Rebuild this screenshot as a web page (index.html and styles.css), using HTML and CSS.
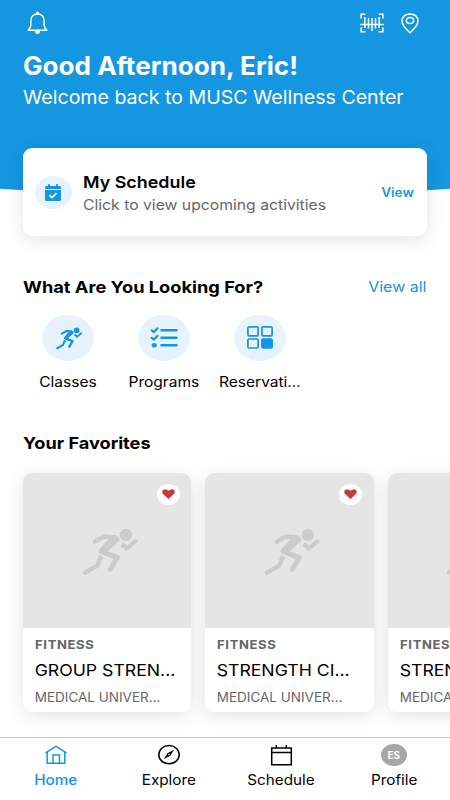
FILE: index.html
```html
<!DOCTYPE html>
<html lang="en">
<head>
  <meta charset="utf-8">
  <title>Home</title>
  <link rel="stylesheet" href="styles.css">
</head>
<body>
  <svg class="defs" width="0" height="0">
    <symbol id="runner" viewBox="226 303 190 150">
      <circle cx="375.500" cy="329.500" r="18.500" fill="currentColor"/>
      <path d="M337 329.500 Q352 331 358 346 L322 378 L297 385 Q290 379 298 371 L322 344 Z" fill="currentColor"/>
      <g fill="none" stroke="currentColor" stroke-linecap="round" stroke-linejoin="round">
        <path d="M282 350 L310 334.500 L343 337" stroke-width="13"/>
        <path d="M347 344 L304 380 L350 398 L329 433" stroke-width="15"/>
        <path d="M369 360 L378 371 L405 348" stroke-width="12"/>
        <path d="M253 443 L290 422 L298 401" stroke-width="13"/>
      </g>
      <path d="M295 391 L309 397 L305 406 L291 402 Z M367 352 L375 362 L366 368 L360 362 Z" fill="currentColor"/>
    </symbol>
    <symbol id="heart" viewBox="0 0 13 10">
      <path d="M6.500 10 L1 5 Q-.6 2.700 1 1 Q3.500-.9 6.500 1.700 Q9.500-.9 12 1 Q13.600 2.700 12 5 Z" fill="#c93a3c"/>
    </symbol>
  </svg>

  <div class="page">
    <header class="hero">
      <div class="hero-icons">
        <svg class="bell" width="22" height="24" viewBox="0 0 22 24">
          <circle cx="10.500" cy="2.200" r="1.600" fill="#fff"/>
          <path d="M1.200 19.300 Q3.900 17 3.900 13 V9.500 Q4.200 3.200 10.500 3 Q16.800 3.200 17.100 9.500 V13 Q17.100 17 19.800 19.300 Z" fill="none" stroke="#fff" stroke-width="1.400" stroke-linejoin="round"/>
          <path d="M7.800 19.500 H13.200 Q12.800 23 10.500 23 Q8.200 23 7.800 19.500 Z" fill="#fff"/>
        </svg>
        <svg class="scan" width="24" height="20" viewBox="0 0 24 20">
          <path d="M1.200 5.500 V1.200 H5.500 M18.500 1.200 H22.800 V5.500 M1.200 14.500 V18.800 H5.500 M18.500 18.800 H22.800 V14.500" fill="none" stroke="#fff" stroke-width="1.600"/>
          <path d="M.3 11.500 H23.700" stroke="#fff" stroke-width="1.500"/>
          <path d="M4.800 4 V15 M8.500 5 V15.500 M12 5 V18 M15.500 5 V15.500 M19.200 4 V15" stroke="#fff" stroke-width="1.500"/>
        </svg>
        <svg class="pin" width="18" height="21" viewBox="0 0 18 21">
          <path d="M9 19.800 Q1 12.500 1 8 Q1.500 1.200 9 1 Q16.500 1.200 17 8 Q17 12.500 9 19.800 Z" fill="none" stroke="#fff" stroke-width="1.500"/>
          <ellipse cx="9" cy="7.500" rx="3.600" ry="3" fill="none" stroke="#fff" stroke-width="1.500"/>
        </svg>
      </div>
      <h1 class="greeting">Good Afternoon, Eric!</h1>
      <p class="welcome">Welcome back to MUSC Wellness Center</p>
    </header>

    <section class="schedule-card">
      <div class="schedule-icon">
        <svg width="16" height="17" viewBox="0 0 16 17">
          <path d="M1.500 2 H3 V.5 Q4-.3 5 .5 V2 H11 V.5 Q12-.3 13 .5 V2 H14.500 Q16 2 16 3.500 V5 H0 V3.500 Q0 2 1.500 2 Z M0 6 H16 V15.500 Q16 17 14.500 17 H1.500 Q0 17 0 15.500 Z" fill="#1496e1"/>
          <path d="M4.500 11.300 L7 13.500 L11.500 9.200" fill="none" stroke="#fff" stroke-width="1.700"/>
        </svg>
      </div>
      <div class="schedule-text">
        <h2 class="schedule-title">My Schedule</h2>
        <p class="schedule-sub">Click to view upcoming activities</p>
      </div>
      <a class="view">View</a>
    </section>

    <div class="section-head">
      <h2 class="looking">What Are You Looking For?</h2>
      <a class="view-all">View all</a>
    </div>

    <div class="categories">
      <div class="category">
        <div class="bubble"><svg width="30" height="24"><use href="#runner"/></svg></div>
        <span class="category-name">Classes</span>
      </div>
      <div class="category">
        <div class="bubble">
          <svg class="list" width="28" height="22" viewBox="0 0 28 22">
            <path d="M11.500 3.200 H26.500 M11.500 10.700 H26.500 M11.500 18.200 H26.500" stroke="#1496e1" stroke-width="2.600" stroke-linecap="round"/>
            <path d="M1.700 3.300 L4 5.100 L7.500 1.300 M1.700 10.800 L4 12.600 L7.500 8.800" fill="none" stroke="#1496e1" stroke-width="2.200" stroke-linecap="round" stroke-linejoin="round"/>
            <ellipse cx="4.300" cy="18.300" rx="2.600" ry="2.300" fill="#1496e1"/>
          </svg>
        </div>
        <span class="category-name">Programs</span>
      </div>
      <div class="category">
        <div class="bubble">
          <svg width="26" height="23" viewBox="0 0 26 23">
            <g fill="none" stroke="#1496e1" stroke-width="1.700">
              <rect x=".9" y=".9" width="10.200" height="9" rx="1.200"/>
              <rect x="14.900" y=".9" width="10.200" height="9" rx="1.200"/>
              <rect x=".9" y="13" width="10.200" height="9" rx="1.200"/>
              <rect x="14.900" y="13" width="10.200" height="9" rx="1.200" fill="#1496e1"/>
            </g>
          </svg>
        </div>
        <span class="category-name">Reservati...</span>
      </div>
    </div>

    <h2 class="favorites-title">Your Favorites</h2>
    <div class="favorites">
      <article class="fav">
        <div class="fav-image">
          <svg width="63.300" height="50"><use href="#runner"/></svg>
          <span class="badge"><svg width="13" height="10"><use href="#heart"/></svg></span>
        </div>
        <p class="fav-type">FITNESS</p>
        <h3 class="fav-name">GROUP STREN...</h3>
        <p class="fav-place">MEDICAL UNIVER...</p>
      </article>
      <article class="fav">
        <div class="fav-image">
          <svg width="63.300" height="50"><use href="#runner"/></svg>
          <span class="badge"><svg width="13" height="10"><use href="#heart"/></svg></span>
        </div>
        <p class="fav-type">FITNESS</p>
        <h3 class="fav-name">STRENGTH CI...</h3>
        <p class="fav-place">MEDICAL UNIVER...</p>
      </article>
      <article class="fav">
        <div class="fav-image">
          <svg width="63.300" height="50"><use href="#runner"/></svg>
          <span class="badge"><svg width="13" height="10"><use href="#heart"/></svg></span>
        </div>
        <p class="fav-type">FITNESS</p>
        <h3 class="fav-name">STRENGTH CI...</h3>
        <p class="fav-place">MEDICAL UNIVER...</p>
      </article>
    </div>

    <nav class="tabs">
      <a class="tab active">
        <svg width="24" height="22" viewBox="0 0 24 22">
          <path d="M1.500 8.800 L12 2.300 L22.500 8.800 M3.200 7.800 V19.300 H20.800 V7.800 M9 19.300 V11 H15.500 V19.300" fill="none" stroke="#1496e1" stroke-width="1.500"/>
        </svg>
        <span>Home</span>
      </a>
      <a class="tab">
        <svg width="24" height="22" viewBox="0 0 24 22">
          <ellipse cx="12" cy="10.700" rx="10.200" ry="9.100" fill="none" stroke="#000" stroke-width="1.500"/>
          <path d="M6.800 15 L10.500 9.300 L17 5.800 L13.300 11.800 Z" fill="#000"/>
          <circle cx="12" cy="10.500" r=".8" fill="#fff"/>
        </svg>
        <span>Explore</span>
      </a>
      <a class="tab">
        <svg width="24" height="22" viewBox="0 0 24 22">
          <path d="M2.700 4 H22.300 V20.700 H2.700 Z M2.700 8.500 H22.300 M7.300 1 V4 M17.300 1 V4" fill="none" stroke="#000" stroke-width="1.500"/>
        </svg>
        <span>Schedule</span>
      </a>
      <a class="tab">
        <div class="avatar">ES</div>
        <span>Profile</span>
      </a>
    </nav>
  </div>
</body>
</html>
```
FILE: styles.css
```css
* {
  box-sizing: border-box;
}

body {
  margin: 0;
  font-family: Inter, "Liberation Sans", sans-serif;
  color: #000;
  background-color: #fff;
}

h1, h2, h3, p {
  margin: 0;
  white-space: nowrap;
  transform-origin: left center;
}

svg {
  display: block;
}

.defs {
  position: absolute;
}

.page {
  height: 800px;
  width: 450px;
  overflow: hidden;
  display: flex;
  flex-direction: column;
}

.hero {
  height: 200px;
  flex: none;
  padding: 11px 24px 0 22.5px;
  color: #fff;
  background-color: #1496e1;
  clip-path: path("M0 0 H450 V188.700 Q225 205 0 188.700 Z");
}

.hero-icons {
  display: flex;
  align-items: center;
  height: 24px;
  padding: 0 7px 0 4.5px;
}

.bell {
  margin-right: auto;
}

.pin {
  margin-left: 17px;
}

.greeting {
  margin-top: 15px;
  font-size: 25px;
  line-height: 32px;
  font-weight: 700;
  transform: scaleX(1.044);
}

.welcome {
  font-size: 18.5px;
  line-height: 30px;
  transform: scaleX(1.058);
}

.schedule-card {
  position: relative;
  flex: none;
  display: flex;
  align-items: center;
  width: 404px;
  height: 88px;
  margin: -51.6px 0 0 23px;
  padding: 0 13px 0 12px;
  border-radius: 9px;
  background-color: #fff;
  box-shadow: 0 4px 18px rgba(30, 60, 50, 0.13);
}

.schedule-icon {
  display: flex;
  align-items: center;
  justify-content: center;
  width: 36.5px;
  height: 33px;
  border-radius: 50%;
  background-color: #e6f3fc;
}

.schedule-text {
  flex: 1;
  padding: 2px 0 0 11.3px;
}

.schedule-title {
  font-size: 16.5px;
  line-height: 23px;
  font-weight: 600;
  transform: scaleX(1.085);
}

.schedule-sub {
  font-size: 14.5px;
  line-height: 22px;
  color: #666;
  transform: scaleX(1.085);
}

.view {
  font-size: 12.8px;
  font-weight: 600;
  color: #1496e1;
  transform: scaleX(1.06);
  transform-origin: right center;
}

.section-head {
  display: flex;
  align-items: center;
  justify-content: space-between;
  height: 24px;
  margin: 38.6px 23.5px 0 22.9px;
}

.looking {
  font-size: 16.5px;
  font-weight: 700;
  transform: scaleX(1.105);
}

.view-all {
  font-size: 14.7px;
  color: #1496e1;
  transform: scaleX(1.09);
  transform-origin: right center;
}

.categories {
  display: flex;
  margin: 15.5px 0 0 19.6px;
}

.category {
  width: 96px;
  display: flex;
  flex-direction: column;
  align-items: center;
}

.bubble {
  display: flex;
  align-items: center;
  justify-content: center;
  width: 52px;
  height: 46.5px;
  border-radius: 50%;
  color: #1496e1;
  background-color: #e6f3fc;
}

.category-name {
  margin-top: 11px;
  font-size: 14px;
  line-height: 20px;
  transform: scaleX(1.11);
}

.favorites-title {
  margin: 39px 0 0 22.9px;
  font-size: 16.5px;
  line-height: 24px;
  font-weight: 700;
  transform: scaleX(1.1);
}

.favorites {
  display: flex;
  gap: 14px;
  margin: 18px 0 0 23px;
}

.fav {
  flex: none;
  width: 168.4px;
  height: 238.5px;
  border-radius: 9px;
  background-color: #fff;
  box-shadow: 0 4px 18px rgba(30, 60, 50, 0.13);
}

.fav-image {
  position: relative;
  display: flex;
  align-items: center;
  justify-content: center;
  height: 155px;
  border-radius: 9px 9px 0 0;
  color: #cbcbcb;
  background-color: #e5e5e5;
}

.badge {
  position: absolute;
  top: 10.5px;
  right: 11.5px;
  display: flex;
  align-items: center;
  justify-content: center;
  width: 23px;
  height: 21px;
  border-radius: 50%;
  background-color: #fff;
}

.fav-type {
  padding: 7px 0 0 11.4px;
  font-size: 12.3px;
  line-height: 20px;
  font-weight: 700;
  letter-spacing: 0.6px;
  color: #666;
  transform: scaleX(1.06);
}

.fav-name {
  padding: 4px 0 0 10.9px;
  font-size: 16.5px;
  line-height: 23px;
  font-weight: 400;
  transform: scaleX(1.07);
}

.fav-place {
  padding: 6px 0 0 10.9px;
  font-size: 12.5px;
  line-height: 20px;
  color: #666;
  transform: scaleX(1.08);
}

.tabs {
  position: relative;
  display: flex;
  flex: none;
  height: 63px;
  margin-top: auto;
  border-top: 1px solid #c6c6c6;
  background-color: #fff;
}

.tab {
  flex: 1;
  display: flex;
  flex-direction: column;
  align-items: center;
  gap: 3.5px;
  padding-top: 6px;
  font-size: 14px;
  line-height: 20px;
}

.tab span {
  transform: scaleX(1.09);
}

.active {
  color: #1496e1;
  font-weight: 500;
}

.avatar {
  width: 25.5px;
  height: 22px;
  border-radius: 50%;
  font-size: 10px;
  line-height: 23px;
  font-weight: 700;
  text-align: center;
  color: #fff;
  background-color: #a6a6a6;
}
```
